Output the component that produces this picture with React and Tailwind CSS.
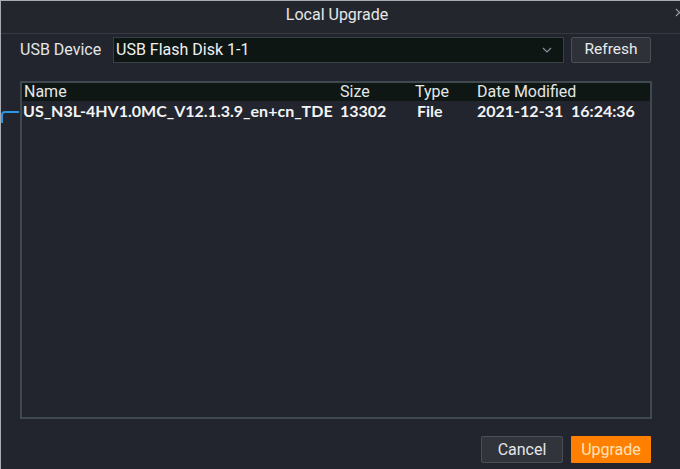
import React from "react";

const rows = [
  {
    name: "US_N3L-4HV1.0MC_V12.1.3.9_en+cn_TDE",
    size: "13302",
    type: "File",
    date: "2021-12-31  16:24:36",
  },
];

function Chevron() {
  return (
    <svg width="10" height="6" viewBox="0 0 10 6" fill="none">
      <path d="M1 1l4 4 4-4" stroke="#8a9099" strokeWidth="1.2" />
    </svg>
  );
}

export default function App() {
  return (
    <div
      className="relative w-[680px] h-[469px] bg-[#22252d] border-l border-t border-[#a7abb0] overflow-hidden flex flex-col text-[#e4e6e8]"
      style={{ fontFamily: "Roboto, 'Liberation Sans', sans-serif" }}
    >
      {/* title bar */}
      <div className="h-[33px] shrink-0 flex items-center justify-center border-b border-[#373a42] bg-[#24262e] relative">
        <span className="text-[16px] text-[#e6e7e9] pb-[5px] pr-[7px]">Local Upgrade</span>
        <svg className="absolute right-[-4px] top-[7px]" width="9" height="9" viewBox="0 0 9 9">
          <path d="M1 1l7 7M8 1l-7 7" stroke="#9a9ea5" strokeWidth="1.2" />
        </svg>
      </div>

      {/* device selector */}
      <div className="flex items-center h-[26px] mt-[3px] pl-[19px]">
        <span className="text-[16px] w-[93px]">USB Device</span>
        <div className="w-[451px] h-[26px] bg-[#0e1613] border border-[#3a3f44] flex items-center justify-between pl-[2px] pr-[11px]">
          <span className="text-[16px] text-[#eef0f2]">USB Flash Disk 1-1</span>
          <Chevron />
        </div>
        <button className="ml-[7px] w-[80px] h-[26px] bg-[#2e3138] border border-[#4a4e55] rounded-[2px] text-[15.5px] text-[#e8e9eb]">
          Refresh
        </button>
      </div>

      {/* file table */}
      <div className="ml-[19px] mt-[18px] w-[632px] h-[338px] border-2 border-[#404850] flex flex-col">
        <div className="h-[18px] bg-[#0e1714] flex items-center text-[16px] text-[#e4e6e8]">
          <span className="w-[318px] pl-[2px]">Name</span>
          <span className="w-[75px]">Size</span>
          <span className="w-[62px]">Type</span>
          <span>Date Modified</span>
        </div>
        {rows.map((r) => (
          <div
            key={r.name}
            className="h-[20px] flex items-center text-[16px] font-bold text-[#f2f3f5] whitespace-pre"
            style={{ fontFamily: "Lato, 'Noto Sans', sans-serif" }}
          >
            <span className="w-[318px] pl-[1px] overflow-hidden">{r.name}</span>
            <span className="w-[77px]">{r.size}</span>
            <span className="w-[60px]">{r.type}</span>
            <span>{r.date}</span>
          </div>
        ))}
      </div>

      {/* pointer line to the file row */}
      <svg className="absolute left-[-1px] top-[108px]" width="20" height="14" viewBox="0 0 20 14">
        <path d="M19 3H5Q2 3 2 6V14" stroke="#2f94e0" strokeWidth="2" fill="none" />
      </svg>

      {/* footer buttons */}
      <div className="flex justify-end gap-[8px] mt-[17px] pr-[29px]">
        <button className="w-[82px] h-[27px] bg-[#31343b] border border-[#4a4e55] rounded-[2px] text-[16px] text-[#e4e6e8]">
          Cancel
        </button>
        <button className="w-[80px] h-[27px] bg-[#ff8000] rounded-[1px] text-[16px] text-[#ffe2b8]">
          Upgrade
        </button>
      </div>
    </div>
  );
}
